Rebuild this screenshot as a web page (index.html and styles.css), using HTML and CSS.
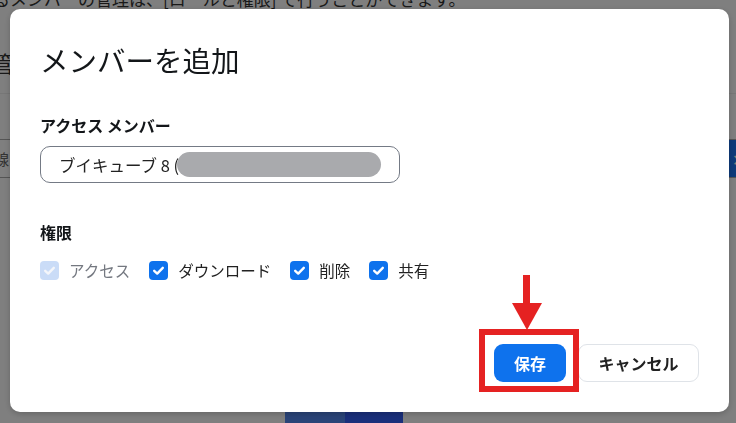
FILE: index.html
```html
<!DOCTYPE html>
<html lang="ja">
<head>
<meta charset="utf-8">
<title>メンバーを追加</title>
<link rel="stylesheet" href="styles.css">
</head>
<body>
<div class="page">
  <p class="note">るメンバーの管理は、[ロールと権限] で行うことができます。</p>
  <h2 class="page-title">管理</h2>
  <div class="table">
    <div class="row row-head"></div>
    <div class="row"><span class="cell">線</span><span class="row-btn">✕</span></div>
  </div>
  <div class="banner"><span class="b1"></span><span class="b2"></span></div>
</div>

<div class="overlay">
  <div class="modal">
    <h1 class="title">メンバーを追加</h1>
    <div class="field-label">アクセス メンバー</div>
    <div class="input"><span class="input-text">ブイキューブ 8 (</span><span class="redact"></span></div>
    <div class="perm-label">権限</div>
    <div class="checks">
      <label class="check disabled">
        <span class="box"><svg viewBox="0 0 19 19"><path d="M5.2 9.8 L8.2 12.6 L13.8 6.8"/></svg></span>
        <span class="check-text">アクセス</span>
      </label>
      <label class="check">
        <span class="box"><svg viewBox="0 0 19 19"><path d="M5.2 9.8 L8.2 12.6 L13.8 6.8"/></svg></span>
        <span class="check-text">ダウンロード</span>
      </label>
      <label class="check">
        <span class="box"><svg viewBox="0 0 19 19"><path d="M5.2 9.8 L8.2 12.6 L13.8 6.8"/></svg></span>
        <span class="check-text">削除</span>
      </label>
      <label class="check">
        <span class="box"><svg viewBox="0 0 19 19"><path d="M5.2 9.8 L8.2 12.6 L13.8 6.8"/></svg></span>
        <span class="check-text">共有</span>
      </label>
    </div>
    <div class="actions">
      <button class="btn btn-primary">保存</button>
      <button class="btn btn-secondary">キャンセル</button>
    </div>
  </div>
</div>

<div class="annot-box"></div>
<svg class="annot-arrow" viewBox="0 0 34 60"><rect x="13" y="3" width="7" height="29"/><polygon points="2,31 32,31 17,58"/></svg>
</body>
</html>
```

FILE: styles.css
```css
html, body {
  margin: 0;
  padding: 0;
}
body {
  width: 736px;
  height: 423px;
  overflow: hidden;
  background: #ffffff;
  font-family: "Noto Sans CJK JP", "Noto Sans", sans-serif;
  color: #222;
}
.page {
  width: 736px;
  height: 423px;
  overflow: hidden;
  background: #fff;
}
.note {
  margin: -11px 0 0 -7px;
  font-size: 17px;
  line-height: 20px;
  color: #333;
  white-space: nowrap;
}
.page-title {
  margin: 38px 0 0 -8px;
  font-size: 22px;
  line-height: 30px;
  font-weight: 400;
  color: #333;
}
.table {
  margin-top: 16px;
}
.row {
  display: flex;
  justify-content: space-between;
  align-items: center;
}
.row-head {
  height: 47px;
  border-top: 1px solid #eeeeee;
  border-bottom: 1px solid #aaaaaa;
  box-sizing: border-box;
}
.row + .row {
  height: 37px;
  border-bottom: 1px solid #aaaaaa;
}
.cell {
  margin-left: -6px;
  font-size: 15px;
  color: #666;
}
.row-btn {
  align-self: stretch;
  width: 60px;
  margin-right: -53px;
  background: #1c74f5;
  color: #fff;
  font-size: 16px;
  display: flex;
  align-items: center;
  padding-left: 3px;
  box-sizing: border-box;
}
.banner {
  display: flex;
  margin: 234px 0 0 285px;
  height: 20px;
}
.b1 { width: 60px; background: #5488f0; }
.b2 { width: 58px; background: #345ef6; }

.overlay {
  position: fixed;
  inset: 0;
  background: rgba(0, 0, 0, 0.5);
  padding: 9px 7px 11px 10px;
  display: flex;
}
.modal {
  flex: 1;
  background: #fff;
  border-radius: 10px;
  padding: 31px 30px 30px 30px;
  display: flex;
  flex-direction: column;
  box-shadow: 0 2px 6px rgba(0, 0, 0, 0.2);
}
.title {
  margin: 0;
  font-size: 28.5px;
  line-height: 40px;
  font-weight: 400;
  color: #131619;
}
.field-label, .perm-label {
  font-size: 16px;
  line-height: 24px;
  font-weight: 700;
  color: #131619;
}
.field-label { margin-top: 33px; }
.perm-label { margin-top: 37px; }
.input {
  margin-top: 9px;
  width: 360px;
  height: 37px;
  box-sizing: border-box;
  border: 1px solid #747a85;
  border-radius: 10px;
  padding: 0 18px;
  display: flex;
  align-items: center;
  font-size: 16.5px;
  color: #222;
}
.input-text { white-space: pre; }
.redact {
  display: inline-block;
  width: 207px;
  height: 25px;
  margin-left: -2px;
  border-radius: 13px;
  background: #a9aaad;
}
.checks {
  margin-top: 14px;
  height: 24px;
  display: flex;
  align-items: center;
  gap: 19px;
}
.check {
  display: flex;
  align-items: center;
  gap: 10px;
  font-size: 15.5px;
  color: #222;
}
.box {
  width: 19px;
  height: 19px;
  border-radius: 4px;
  background: #0e72ed;
  display: block;
}
.box svg {
  display: block;
  width: 19px;
  height: 19px;
}
.box path {
  fill: none;
  stroke: #fff;
  stroke-width: 2.4;
  stroke-linecap: round;
  stroke-linejoin: round;
}
.check.disabled .box { background: #cadcf7; }
.check.disabled .box path { stroke: #f4f6fa; }
.check.disabled .check-text { color: #747880; }

.actions {
  margin-top: auto;
  display: flex;
  justify-content: flex-end;
  gap: 12px;
}
.btn {
  height: 38px;
  border-radius: 9px;
  font-family: inherit;
  font-size: 16px;
  font-weight: 700;
  padding: 0;
  white-space: nowrap;
  box-sizing: border-box;
  cursor: pointer;
}
.btn-primary {
  width: 72px;
  background: #0e72ed;
  color: #fff;
  border: none;
}
.btn-secondary {
  width: 121px;
  background: #fff;
  color: #222;
  border: 1px solid #dfe3e8;
}

.annot-box {
  position: absolute;
  left: 479px;
  top: 329px;
  width: 100px;
  height: 63px;
  box-sizing: border-box;
  border: 6px solid #e52222;
}
.annot-arrow {
  position: absolute;
  left: 510px;
  top: 272px;
  width: 34px;
  height: 60px;
  fill: #e52222;
}
```
